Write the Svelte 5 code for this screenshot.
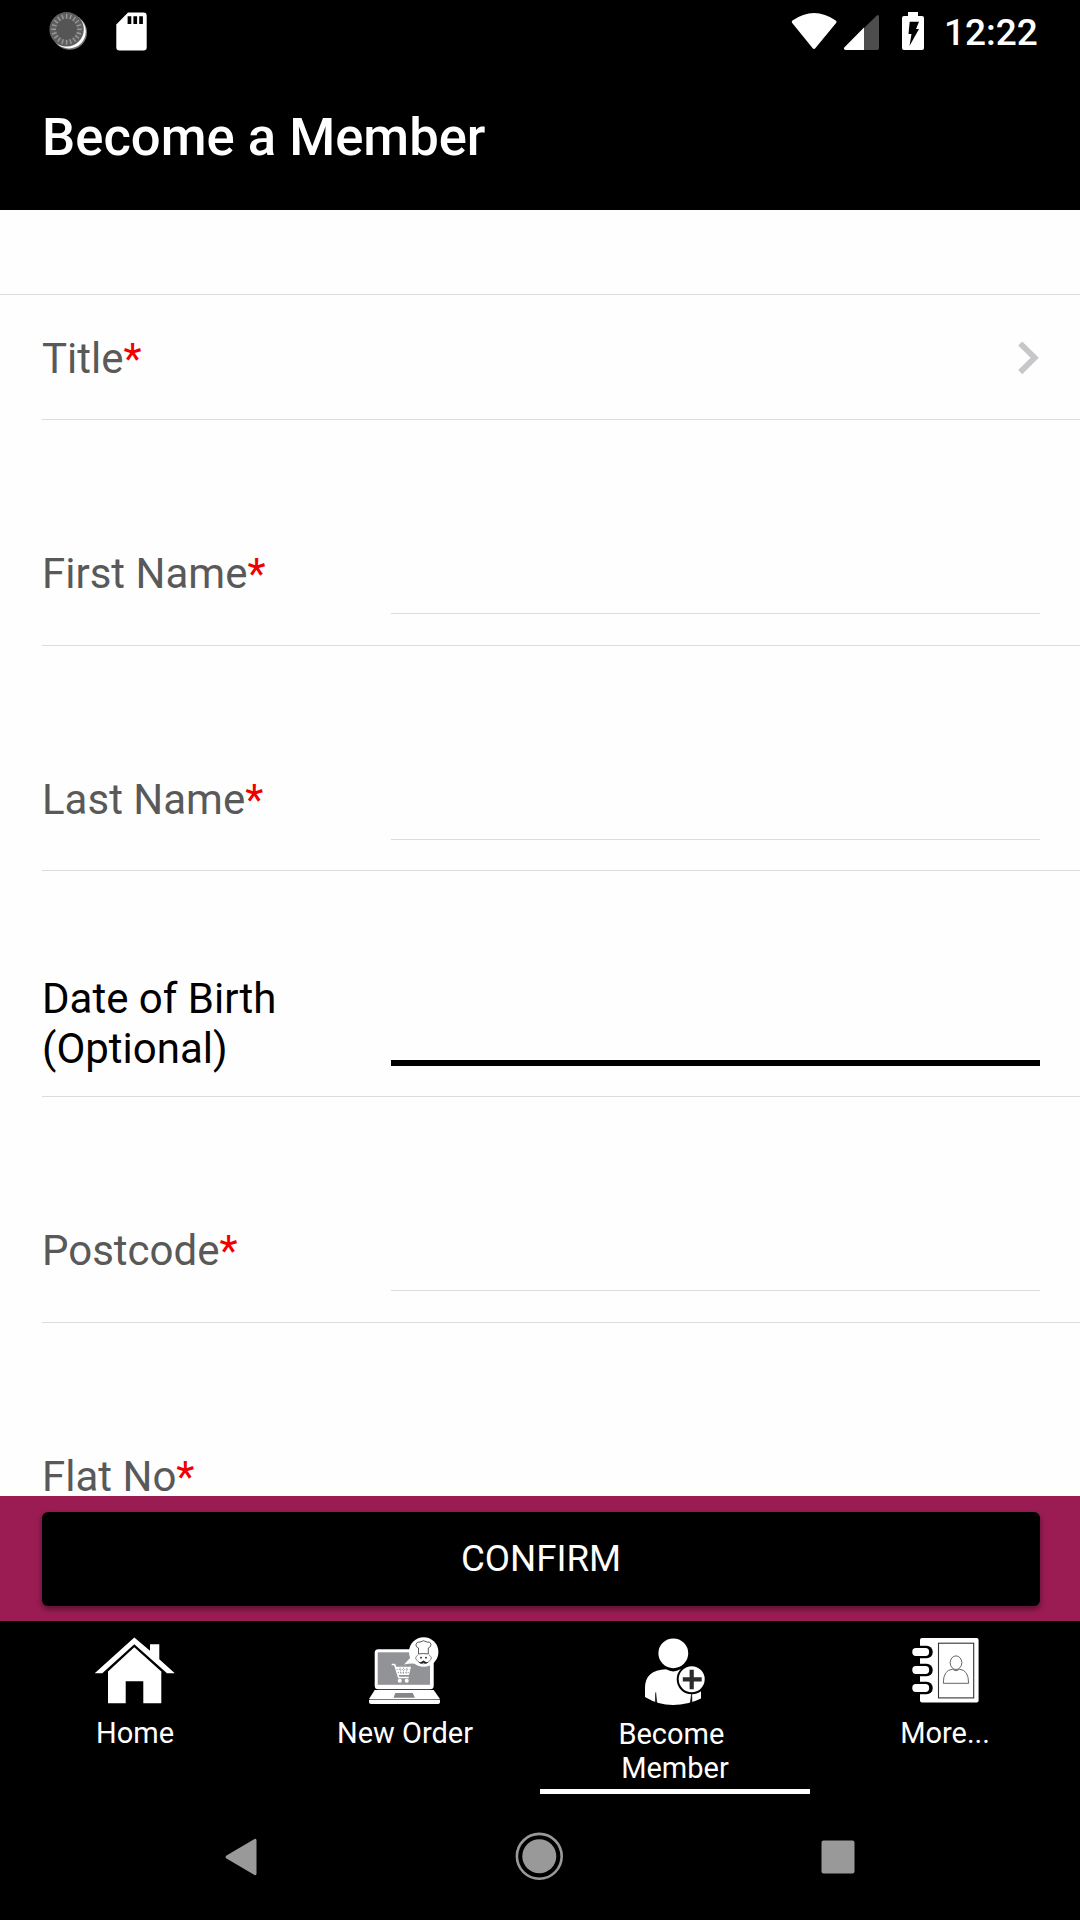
<script>
  const fields = [
    { label: 'First Name', required: true },
    { label: 'Last Name', required: true },
    { label: 'Date of Birth (Optional)', required: false, focused: true },
    { label: 'Postcode', required: true },
    { label: 'Flat No', required: true }
  ];
  const ticks = Array.from({ length: 20 }, (_, i) => i * 18);
  const rings = [22, 40, 58];
</script>

<div class="screen">
  <div class="status">
    <svg class="status-left" width="120" height="63" viewBox="40 0 120 63">
      <circle cx="69.6" cy="32.4" r="17.4" fill="#777" />
      <circle cx="68.8" cy="31.4" r="17" fill="#fff" />
      <circle cx="66.6" cy="29.3" r="17.2" fill="#5f5f5f" />
      {#each ticks as angle}
        <path d="M66.6 14v5" stroke="#999" stroke-width="1.4" transform="rotate({angle} 66.6 29.3)" />
      {/each}
      <circle cx="66.6" cy="29.3" r="10.5" fill="#555" />
      <path d="M128 12.6h15.5q3.2 0 3.2 3.2v31.4q0 3.2-3.2 3.2h-24q-3.2 0-3.2-3.2V24.500z" fill="#fff" />
      <path d="M127.600 16.300h3.700V24h-3.700zM133.400 16.300h3.700V24h-3.700zM139.200 16.300h3.700V24h-3.700z" fill="#000" />
    </svg>
    <div class="status-right">
      <svg width="140" height="63" viewBox="790 0 140 63">
        <path d="M792.500 20.500Q814 5.500 835.800 20.500q1.500 1 .3 2.600L815.500 48q-1.500 1.800-3 0L792.200 23.100q-1.200-1.600.3-2.600z" fill="#fff" />
        <path d="M864 28l12.800-12.500q2.200-1.400 2.200 1V48q0 2-2 2h-13z" fill="#4d4d4d" />
        <path d="M864 27.500V50h-18.500q-2.600-.6-1-2.700z" fill="#fff" />
        <path d="M908 12h10v4h4q2 0 2 2v30q0 2-2 2h-18q-2 0-2-2V18q0-2 2-2h4z" fill="#fff" />
        <path d="M909.700 21.700h9.300l-3 7.200h3l-9.500 17 2-12h-3z" fill="#000" />
      </svg>
      <span class="clock">12:22</span>
    </div>
  </div>

  <header><h1>Become a Member</h1></header>

  <main>
    <div class="spacer"></div>
    <div class="title-row">
      <span class="label">Title<b>*</b></span>
      <svg width="24" height="40" viewBox="0 0 24 40">
        <path d="M4.200 5.500l14.500 14.300L4.200 34.100" fill="none" stroke="#c7c7c9" stroke-width="5.800" />
      </svg>
    </div>
    {#each fields as field}
      <div class="field" class:focused={field.focused}>
        <span class="label">{field.label}{#if field.required}<b>*</b>{/if}</span>
        <span class="input"></span>
      </div>
    {/each}
  </main>

  <div class="action"><button>CONFIRM</button></div>

  <nav>
    <div class="tab">
      <svg width="90" height="80" viewBox="0 0 90 80" fill="#fff">
        <path d="M44.300 7.500L60 20.800v-6.500h9.300v15L84.800 43.300h-7.800L44.300 14.300 12.300 43.300H4.700z" />
        <path d="M44.300 17.300L71.300 41.500v31.800h-18v-22H35.700v22H18V41.500z" />
      </svg>
      <span>Home</span>
    </div>
    <div class="tab">
      <svg width="90" height="80" viewBox="0 0 90 80" fill="#fff">
        <rect x="14.700" y="19.300" width="59" height="40" rx="3.500" />
        <rect x="17.700" y="22.300" width="52.300" height="32.500" fill="#929396" />
        <path d="M14.700 60h59L80 69H9z" />
        <path d="M9 70h71v2q0 2-2 2H11q-2 0-2-2z" />
        <path d="M9.500 69.500h70" stroke="#aaa" stroke-width=".7" />
        <path d="M35.300 63h17.500l2 4.700H33.500z" fill="#858689" />
        <path d="M51 27L44 34.500Q52 33 57 34z" />
        <circle cx="63.700" cy="22" r="14.700" />
        <path d="M31.700 34.500h3l4 13h10" fill="none" stroke="#fff" stroke-width="1.500" />
        <path d="M35 36.700h16l-2 8.300H37.500z" />
        <path d="M36.500 39.500h13M37.500 42.500h12M40 37.500l1 7M43.500 37.500v7M47 37.500l-.7 7" stroke="#929396" stroke-width=".7" stroke-dasharray="1.500 1" />
        <circle cx="39.800" cy="50.700" r="2" /><circle cx="46.700" cy="50.700" r="2" />
        <path d="M58.500 24v-6q-3-.8-2.500-3.800 1-2.700 4-2.200 3.500-2.500 7 0 3.500-.5 4 2.200 0 3-2.700 3.800v6q-5-1-9.800 0z" fill="#fff" stroke="#333" stroke-width=".8" />
        <path d="M58 24.800q-4.500 3.500-.5 6 2 3 6 3t6-3q4-2.500-.5-6" fill="none" stroke="#555" stroke-width=".7" />
        <circle cx="61" cy="27.700" r=".9" fill="#222" /><circle cx="66" cy="27.700" r=".9" fill="#222" />
        <path d="M58.500 32.500q2.700 0 5-2 2.300 2 5 2-3 2-5 .3-2 1.700-5-.3z" fill="#222" />
      </svg>
      <span>New Order</span>
    </div>
    <div class="tab active">
      <svg width="90" height="80" viewBox="0 0 90 80" fill="#fff">
        <path d="M15 67V58Q15 40 36 39.300Q43.500 43.500 50.500 39.300Q70 41 71 62v6.500Q58 75 43 75T15 67z" />
        <circle cx="43.300" cy="23.300" r="14.900" />
        <path d="M25.700 62.500l1.200 10.500-1.600-.3zM61.700 63l-1.500 10 1.800-.3z" fill="#000" stroke="#000" stroke-width=".5" />
        <circle cx="61.700" cy="49.300" r="14" stroke="#000" stroke-width="2" />
        <path d="M61.700 39.700v19.600M52.800 49.300h18.900" stroke="#2b2a2c" stroke-width="4.200" />
      </svg>
      <span class="two-line">Become {'\n'}Member</span>
    </div>
    <div class="tab">
      <svg width="90" height="80" viewBox="0 0 90 80" fill="#fff">
        <rect x="20" y="8" width="58.600" height="64.600" rx="2" />
        <rect x="38.500" y="13.200" width="35.200" height="54.700" fill="none" stroke="#333" stroke-width="1.100" />
        {#each rings as y}
          <rect x="14" y={y - 6.3} width="18.700" height="12.600" rx="6" fill="#000" />
          <rect x="12.300" y={y - 3.9} width="16.800" height="7.800" rx="3.600" />
        {/each}
        <path d="M52.500 39.300q-9.200.5-9.200 14h25.300q0-13.500-9.100-14-3.500 3-7 0z" fill="none" stroke="#555" stroke-width=".9" />
        <ellipse cx="56" cy="32.700" rx="5.800" ry="6.800" fill="#fff" stroke="#555" stroke-width=".9" />
      </svg>
      <span>More...</span>
    </div>
  </nav>

  <div class="system">
    <svg width="640" height="60" viewBox="220 1826 640 60" fill="#999">
      <path d="M254.500 1839q2-.6 2 1.500v33q0 2.100-2 1.500L226.500 1858.500q-2-1.500 0-3z" />
      <circle cx="539.300" cy="1856.300" r="17" />
      <circle cx="539.300" cy="1856.300" r="22.400" fill="none" stroke="#999" stroke-width="2.600" />
      <rect x="821.500" y="1840.500" width="33" height="33" rx="2" />
    </svg>
  </div>
</div>

<style>
  :global(body) { background: #000; overflow: hidden; }
  .screen {
    width: 1080px; height: 1920px; display: flex; flex-direction: column;
    background: #000; font-family: Roboto, "Liberation Sans", sans-serif; overflow: hidden;
  }
  svg { display: block; flex: none; }
  .status { height: 63px; flex: none; display: flex; justify-content: space-between; padding: 0 42px 0 40px; }
  .status-right { display: flex; width: 248px; gap: 14px; }
  .clock { color: #fff; font-size: 37px; font-weight: 500; line-height: 42px; padding-top: 12px; }
  header { height: 147px; flex: none; display: flex; align-items: center; padding: 0 42px; box-sizing: border-box; }
  h1 { margin: 0; color: #fff; font-size: 52.6px; line-height: 62px; font-weight: 500; }
  main { height: 1286px; flex: none; background: #fefefe; overflow: hidden; }
  .spacer { height: 84px; border-bottom: 1px solid #dcdcdc; }
  .title-row {
    height: 124px; box-sizing: content-box; margin-left: 42px; padding-right: 40px; display: flex;
    align-items: center; justify-content: space-between; border-bottom: 1px solid #dcdcdc;
  }
  .title-row svg { margin-top: 2px; }
  .title-row .label { margin-top: 4px; }
  .label { color: #595959; font-size: 42px; line-height: 50px; }
  .label b { color: #f00000; font-weight: 400; }
  .field {
    height: 225.700px; box-sizing: border-box; margin-left: 42px; padding: 0 40px 30.600px 0;
    display: flex; align-items: flex-end; border-bottom: 1px solid #dcdcdc;
  }
  .field .label { width: 349px; flex: none; padding-bottom: 15px; }
  .input { flex: 1; border-bottom: 1px solid #dcdcdc; }
  .field.focused { padding-bottom: 30px; }
  .focused .label { color: #000; padding: 0 109px 0 0; width: 240px; margin-bottom: -8px; }
  .focused .input { border-bottom: 6px solid #000; }
  .action { height: 125px; flex: none; box-sizing: border-box; padding: 16px 40px 15px 42px; background: #9b1c53; display: flex; }
  button {
    flex: 1; border: 0; border-radius: 6px; background: #000; color: #fff; padding: 0 0 2px;
    font: 400 36.700px Roboto, sans-serif; box-shadow: 0 3px 6px rgba(0, 0, 0, .45);
  }
  nav { height: 173px; flex: none; display: flex; }
  .tab {
    width: 270px; box-sizing: border-box; padding-top: 9px; display: flex;
    flex-direction: column; align-items: center; color: #fff; font-size: 29px; line-height: 34px;
  }
  .tab span { margin-top: 6px; }
  .tab .two-line { white-space: pre; margin-top: 7px; text-align: center; }
  .active { border-bottom: 5px solid #fff; }
  .system { flex: 1; display: flex; justify-content: center; padding-top: 32px; }
</style>
